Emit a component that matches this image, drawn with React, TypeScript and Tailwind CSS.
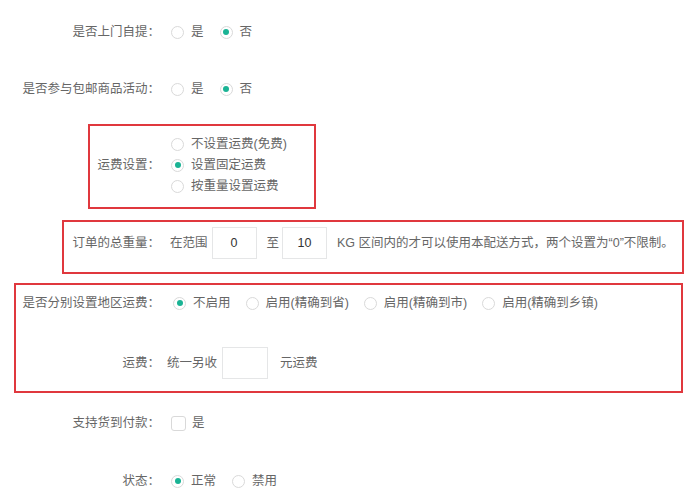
import React from "react";

function Radio({ checked, label }: { checked?: boolean; label: string }) {
  return (
    <label className="flex items-center whitespace-nowrap">
      <span className="flex h-[13px] w-[13px] shrink-0 items-center justify-center rounded-full border border-[#d9d9d9] bg-white">
        {checked && <span className="h-[6px] w-[6px] rounded-full bg-[#1ab394]"></span>}
      </span>
      <span className="ml-[7px]">{label}</span>
    </label>
  );
}

function Label({ w, children }: { w: number; children: React.ReactNode }) {
  return (
    <div className="shrink-0 whitespace-nowrap text-right" style={{ width: w }}>
      {children}
    </div>
  );
}

export default function App() {
  return (
    <div
      className="relative h-[503px] w-[692px] overflow-hidden bg-white text-[12.5px] text-[#666]"
      style={{ fontFamily: '"Liberation Sans", "Noto Sans CJK SC", sans-serif' }}
    >
      {/* 是否上门自提 */}
      <div className="mt-[16px] flex h-[32px] items-center">
        <Label w={160}>是否上门自提：</Label>
        <div className="ml-[11px] flex items-center gap-[16px]">
          <Radio label="是" />
          <Radio checked label="否" />
        </div>
      </div>

      <div className="mt-[25px] flex h-[32px] items-center">
        <Label w={160}>是否参与包邮商品活动：</Label>
        <div className="ml-[11px] flex items-center gap-[16px]">
          <Radio label="是" />
          <Radio checked label="否" />
        </div>
      </div>

      {/* 运费设置 */}
      <div className="ml-[88px] mt-[19px] flex h-[85px] w-[228px] items-center border-2 border-[#e0383e] pb-[3px]">
        <Label w={70}>运费设置：</Label>
        <div className="ml-[11px] flex flex-col">
          <div className="flex h-[21px] items-center"><Radio label="不设置运费(免费)" /></div>
          <div className="flex h-[21px] items-center"><Radio checked label="设置固定运费" /></div>
          <div className="flex h-[21px] items-center"><Radio label="按重量设置运费" /></div>
        </div>
      </div>

      {/* 订单的总重量 */}
      <div className="ml-[62px] mt-[11px] flex h-[54px] w-[622px] items-start border-2 border-[#e0383e] pt-[5px]">
        <div className="flex h-[32px] items-center whitespace-nowrap">
          <Label w={96}>订单的总重量：</Label>
          <span className="ml-[10px] shrink-0">在范围</span>
          <div className="ml-[4px] flex h-[32px] w-[45px] shrink-0 items-center justify-center border border-[#e5e6e7] text-[#333]">0</div>
          <span className="ml-[10px] shrink-0">至</span>
          <div className="ml-[3px] flex h-[32px] w-[45px] shrink-0 items-center justify-center border border-[#e5e6e7] text-[#333]">10</div>
          <span className="ml-[10px]">KG 区间内的才可以使用本配送方式，两个设置为“0”不限制。</span>
        </div>
      </div>

      {/* 地区运费 */}
      <div className="ml-[14px] mt-[9px] h-[110px] w-[669px] border-2 border-[#e0383e] pt-[8px]">
        <div className="flex h-[20px] items-center">
          <Label w={144}>是否分别设置地区运费：</Label>
          <div className="ml-[13px] flex items-center gap-[15px]">
            <Radio checked label="不启用" />
            <Radio label="启用(精确到省)" />
            <Radio label="启用(精确到市)" />
            <Radio label="启用(精确到乡镇)" />
          </div>
        </div>
        <div className="mt-[34px] flex h-[32px] items-center">
          <Label w={144}>运费：</Label>
          <span className="ml-[7px]">统一另收</span>
          <div className="ml-[5px] h-[32px] w-[46px] border border-[#e5e6e7]"></div>
          <span className="ml-[12px]">元运费</span>
        </div>
      </div>

      {/* 货到付款 */}
      <div className="mt-[14px] flex h-[32px] items-center">
        <Label w={160}>支持货到付款：</Label>
        <label className="ml-[11px] flex items-center">
          <span className="h-[15px] w-[15px] rounded-[3px] border border-[#d9d9d9] bg-white"></span>
          <span className="ml-[6px]">是</span>
        </label>
      </div>

      {/* 状态 */}
      <div className="mt-[26px] flex h-[32px] items-center">
        <Label w={160}>状态：</Label>
        <div className="ml-[11px] flex items-center gap-[16px]">
          <Radio checked label="正常" />
          <Radio label="禁用" />
        </div>
      </div>
    </div>
  );
}
